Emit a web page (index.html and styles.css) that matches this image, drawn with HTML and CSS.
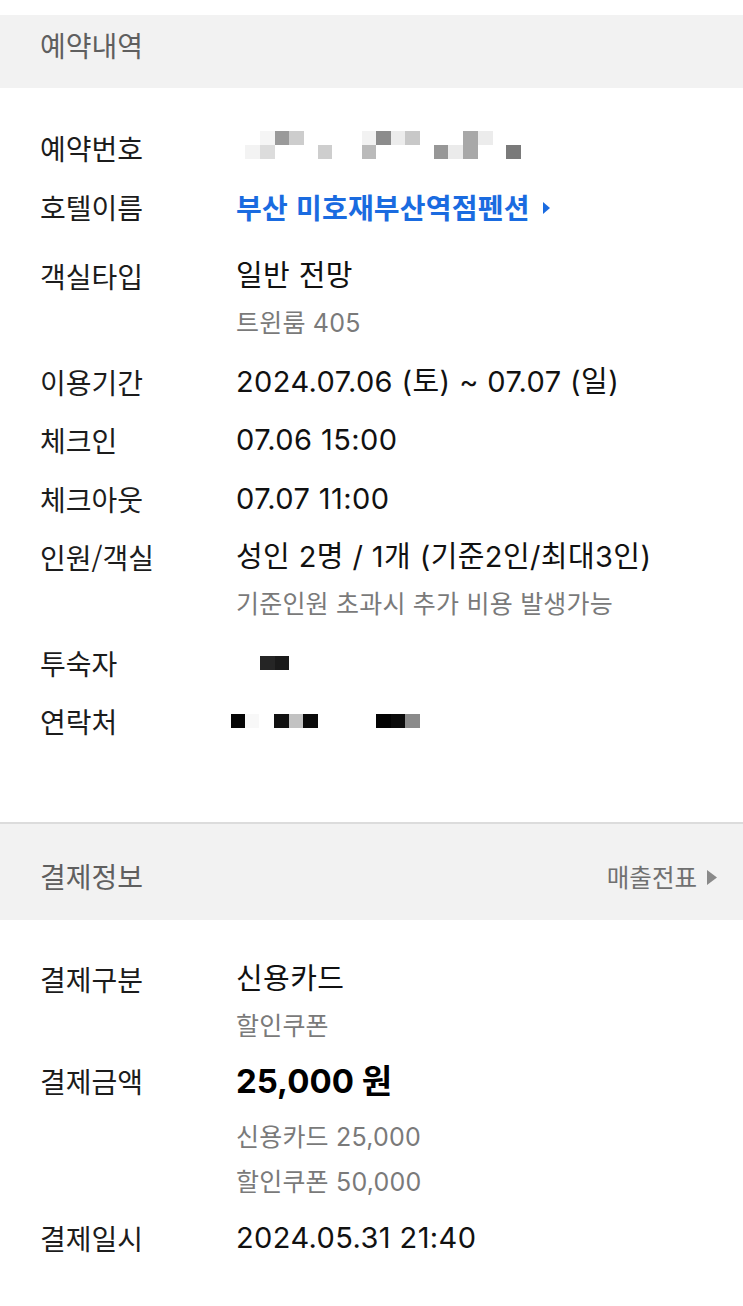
FILE: index.html
```html
<!DOCTYPE html>
<html lang="ko">
<head>
<meta charset="utf-8">
<title>예약내역</title>
<link rel="stylesheet" href="styles.css">
</head>
<body>
<div class="page">
  <section class="sec sec-first">
    <div class="sec-head head-first"><span class="head-title">예약내역</span></div>
    <div class="rows rows-first">
      <div class="row">
        <div class="label">예약번호</div>
        <div class="val">
          <svg class="mask mask-no" width="300" height="36" viewBox="0 0 300 36">
            <rect x="24" y="1" width="15" height="14" fill="#f5f5f5"/>
            <rect x="39" y="1" width="14" height="14" fill="#9a9a9a"/>
            <rect x="53" y="1" width="15" height="14" fill="#cdcdcd"/>
            <rect x="126" y="1" width="14" height="14" fill="#f2f2f2"/>
            <rect x="140" y="1" width="15" height="14" fill="#8c8c8c"/>
            <rect x="155" y="1" width="14" height="14" fill="#ececec"/>
            <rect x="169" y="1" width="15" height="14" fill="#c8c8c8"/>
            <rect x="227" y="1" width="15" height="28" fill="#a8a8a8"/>
            <rect x="242" y="1" width="15" height="14" fill="#ececec"/>
            <rect x="9" y="15" width="15" height="14" fill="#f3f3f3"/>
            <rect x="24" y="15" width="15" height="14" fill="#dcdcdc"/>
            <rect x="82" y="15" width="14" height="14" fill="#cecece"/>
            <rect x="126" y="15" width="14" height="14" fill="#bababa"/>
            <rect x="198" y="15" width="14" height="14" fill="#979797"/>
            <rect x="212" y="15" width="15" height="14" fill="#ebebeb"/>
            <rect x="270" y="15" width="15" height="14" fill="#7a7a7a"/>
          </svg>
        </div>
      </div>
      <div class="row row-hotel">
        <div class="label">호텔이름</div>
        <div class="val hotel">부산 미호재부산역점펜션<svg class="tri-blue" width="8" height="12" viewBox="0 0 8 12"><path d="M0 0 L7 6 L0 12 Z" fill="#1a6be0"/></svg></div>
      </div>
      <div class="row">
        <div class="label">객실타입</div>
        <div class="val">
          <div class="main">일반 전망</div>
          <div class="sub">트윈룸 405</div>
        </div>
      </div>
      <div class="row">
        <div class="label">이용기간</div>
        <div class="val"><div class="main">2024.07.06 (토) ~ 07.07 (일)</div></div>
      </div>
      <div class="row">
        <div class="label">체크인</div>
        <div class="val"><div class="main">07.06 15:00</div></div>
      </div>
      <div class="row">
        <div class="label">체크아웃</div>
        <div class="val"><div class="main">07.07 11:00</div></div>
      </div>
      <div class="row">
        <div class="label">인원/객실</div>
        <div class="val">
          <div class="main">성인 2명 / 1개 (기준2인/최대3인)</div>
          <div class="sub">기준인원 초과시 추가 비용 발생가능</div>
        </div>
      </div>
      <div class="row">
        <div class="label">투숙자</div>
        <div class="val">
          <svg class="mask" width="60" height="36" viewBox="0 0 60 36">
            <rect x="24" y="11" width="15" height="14" fill="#252525"/>
            <rect x="39" y="11" width="14" height="14" fill="#1a1a1a"/>
          </svg>
        </div>
      </div>
      <div class="row">
        <div class="label">연락처</div>
        <div class="val">
          <svg class="mask mask-tel" width="200" height="36" viewBox="0 0 200 36">
            <rect x="5" y="11" width="14" height="14" fill="#050505"/>
            <rect x="19" y="11" width="14" height="14" fill="#f8f8f8"/>
            <rect x="48" y="11" width="15" height="14" fill="#111111"/>
            <rect x="63" y="11" width="14" height="14" fill="#c2c2c2"/>
            <rect x="77" y="11" width="15" height="14" fill="#0a0a0a"/>
            <rect x="150" y="11" width="15" height="14" fill="#030303"/>
            <rect x="165" y="11" width="14" height="14" fill="#0b0b0b"/>
            <rect x="179" y="11" width="15" height="14" fill="#8a8a8a"/>
          </svg>
        </div>
      </div>
    </div>
  </section>

  <section class="sec sec-pay">
    <div class="sec-head head-pay">
      <span class="head-title">결제정보</span>
      <span class="receipt">매출전표<svg class="tri-gray" width="10" height="15" viewBox="0 0 10 15"><path d="M0 0 L10 7.5 L0 15 Z" fill="#8a8a8a"/></svg></span>
    </div>
    <div class="rows rows-pay">
      <div class="row">
        <div class="label">결제구분</div>
        <div class="val">
          <div class="main">신용카드</div>
          <div class="sub">할인쿠폰</div>
        </div>
      </div>
      <div class="row row-amount">
        <div class="label">결제금액</div>
        <div class="val">
          <div class="main amount">25,000 원</div>
          <div class="sub sub-first">신용카드 25,000</div>
          <div class="sub sub-tight">할인쿠폰 50,000</div>
        </div>
      </div>
      <div class="row row-last">
        <div class="label">결제일시</div>
        <div class="val"><div class="main">2024.05.31 21:40</div></div>
      </div>
    </div>
  </section>
</div>
</body>
</html>
```

FILE: styles.css
```css
* { box-sizing: border-box; }

html, body {
  margin: 0;
  padding: 0;
  background: #ffffff;
}

body {
  font-family: Inter, "Noto Sans CJK KR", sans-serif;
  color: #111111;
}

.page {
  width: 743px;
  padding-top: 15px;
}

.sec-head {
  background: #f2f2f2;
  display: flex;
  align-items: center;
  justify-content: space-between;
  padding-left: 40px;
  padding-right: 26px;
}

.head-first {
  height: 73px;
  padding-top: 0;
  padding-bottom: 13px;
}

.head-pay {
  border-top: 2px solid #dcdcdc;
  height: 98px;
  padding-top: 8px;
}

.head-title {
  font-family: "Noto Sans CJK KR", sans-serif;
  font-size: 28px;
  line-height: 36px;
  color: #5f5f5f;
}

.receipt {
  display: flex;
  align-items: center;
  gap: 10px;
  font-family: "Noto Sans CJK KR", sans-serif;
  font-size: 24.5px;
  color: #707070;
}

.tri-gray {
  display: block;
  margin-top: 2px;
}

.rows {
  display: flex;
  flex-direction: column;
  gap: 22.5px;
  padding-left: 40px;
}

.rows-first {
  padding-top: 42px;
  padding-bottom: 83px;
}

.rows-pay {
  padding-top: 41px;
  padding-bottom: 50px;
}

.row {
  display: flex;
  align-items: flex-start;
}

.row-hotel {
  margin-bottom: 11px;
}

.row-amount {
  margin-top: -3.5px;
}

.row-last {
  margin-top: -3px;
}

.label {
  width: 196px;
  flex: none;
  font-family: "Noto Sans CJK KR", sans-serif;
  font-size: 28px;
  line-height: 36px;
  color: #1c1c1c;
}

.val {
  display: flex;
  flex-direction: column;
  font-size: 29px;
  line-height: 36px;
  min-height: 36px;
}

.main {
  font-size: 29px;
  line-height: 36px;
  color: #111111;
  letter-spacing: 0.4px;
}

.amount {
  font-size: 33px;
  font-weight: 700;
  color: #000000;
  letter-spacing: 0;
}

.sub {
  margin-top: 11px;
  font-size: 25px;
  line-height: 36px;
  color: #7a7a7a;
  letter-spacing: 0.2px;
}

.sub-first {
  margin-top: 20px;
}

.sub-tight {
  margin-top: 9px;
}

.hotel {
  flex-direction: row;
  align-items: center;
  gap: 13px;
  font-family: "Noto Sans CJK KR", sans-serif;
  font-size: 28px;
  font-weight: 700;
  color: #1a6be0;
  letter-spacing: 0.2px;
}

.tri-blue {
  display: block;
  margin-top: 2px;
}

.mask {
  display: block;
}

.mask-tel {
  margin-left: -10px;
}
```
